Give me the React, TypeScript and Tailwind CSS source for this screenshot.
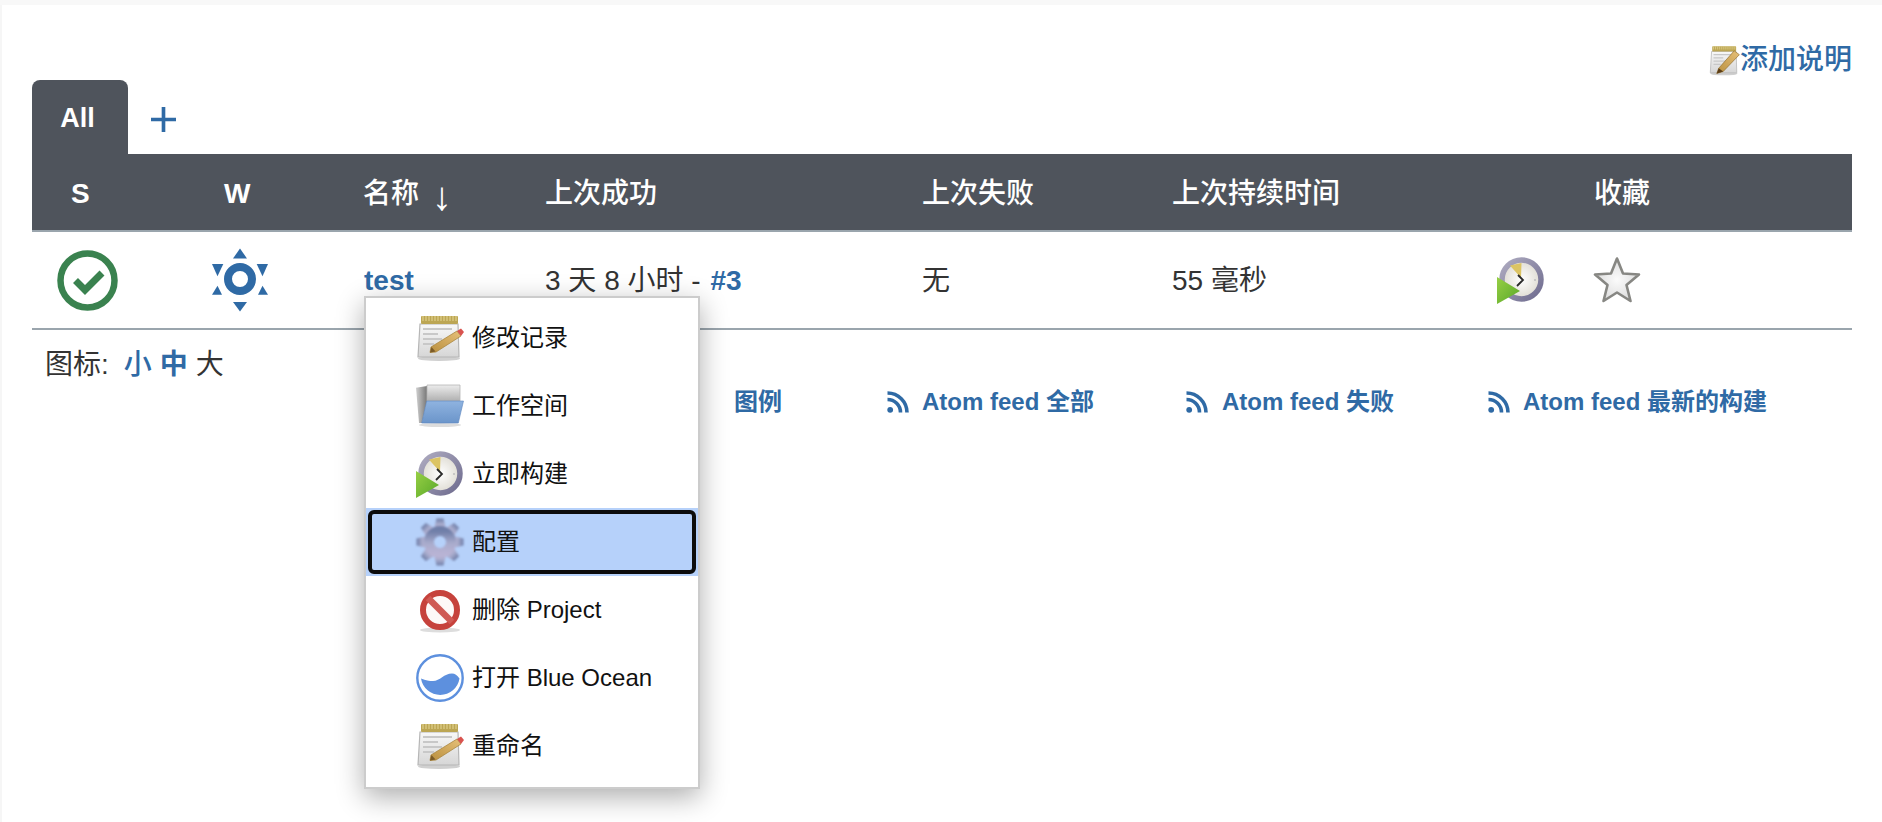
import React from "react";

const FONT = "[font-family:'Liberation_Sans','Noto_Sans_CJK_SC',sans-serif]";

function Notepad({ id, big = false }: { id: string; big?: boolean }) {
  return (
    <svg viewBox="0 0 48 48" className={big ? "w-[31px] h-[31px] blur-[0.5px]" : "w-12 h-12 blur-[0.7px]"}>
      <defs>
        <linearGradient id={id} x1="0" y1="0" x2="0" y2="1">
          <stop offset="0" stopColor="#f8f8f8" />
          <stop offset="1" stopColor="#d6d6d6" />
        </linearGradient>
        <linearGradient id={id + "p"} x1="0" y1="1" x2="1" y2="0">
          <stop offset="0" stopColor="#b98f3e" />
          <stop offset="1" stopColor="#e6c079" />
        </linearGradient>
      </defs>
      <ellipse cx="23" cy="44.5" rx="21" ry="2.5" fill="#d0d0d0" />
      <path d="M4 10 L42 10 L43 43 L2 43 Z" fill={`url(#${id})`} stroke="#b6b6b6" strokeWidth="1.2" />
      <rect x="5" y="2" width="37" height="8" rx="1" fill="#bca654" />
      <path d="M7 2v5M10 2v5M13 2v5M16 2v5M19 2v5M22 2v5M25 2v5M28 2v5M31 2v5M34 2v5M37 2v5M40 2v5" stroke="#e0cf8a" strokeWidth="1.2" />
      <path d="M7 15H36M7 20H22M7 25H26M7 30H18" stroke="#c8c8c8" strokeWidth="1.8" />
      {big ? (
        <>
          <path d="M15 36 L39 9 L47 15 L22 41 L12 44 Z" fill={`url(#${id}p)`} stroke="#8d6b2c" strokeWidth="1" />
          <path d="M12 44 L15 36 L22 41 Z" fill="#5b3d17" />
        </>
      ) : (
        <>
          <path d="M15 33 L41 17 L45 22 L20 38 L14 38.5 Z" fill={`url(#${id}p)`} stroke="#a98640" strokeWidth="0.8" />
          <path d="M14 38.5 L15.5 33 L19.5 37.5 Z" fill="#7a5a28" />
          <path d="M41 17 L45 14.5 L48 18 L45 22 Z" fill="#d9534f" />
        </>
      )}
    </svg>
  );
}

function Folder() {
  return (
    <svg viewBox="0 0 48 48" className="w-12 h-12 blur-[0.7px]">
      <defs>
        <linearGradient id="fb" x1="0" y1="0" x2="0" y2="1">
          <stop offset="0" stopColor="#8fb3e0" />
          <stop offset="1" stopColor="#6b95ca" />
        </linearGradient>
        <linearGradient id="fg" x1="0" y1="0" x2="1" y2="0">
          <stop offset="0" stopColor="#d0d0d0" />
          <stop offset="1" stopColor="#777777" />
        </linearGradient>
        <linearGradient id="fp" x1="0" y1="0" x2="0" y2="1">
          <stop offset="0" stopColor="#ececec" />
          <stop offset="1" stopColor="#b0b0b0" />
        </linearGradient>
      </defs>
      <ellipse cx="24" cy="43" rx="21" ry="2" fill="#dcdcdc" />
      <path d="M0 5.7 L11 4 L11 20 L6 41 L3 41 Z" fill="url(#fg)" />
      <path d="M11 3 L44 3 L44 19 L11 19 Z" fill="url(#fp)" stroke="#b5b5b5" strokeWidth="0.8" />
      <path d="M10.7 19 L47.5 19 L42.3 41 L5.7 41 Z" fill="url(#fb)" stroke="#5f88bf" strokeWidth="0.6" />
    </svg>
  );
}

function Clock({ id }: { id: string }) {
  return (
    <svg viewBox="0 0 48 48" className="w-12 h-12 shrink-0 blur-[0.7px]">
      <defs>
        <radialGradient id={id}>
          <stop offset="0" stopColor="#ffffff" />
          <stop offset="1" stopColor="#dedbd2" />
        </radialGradient>
        <linearGradient id={id + "g"} x1="0" y1="0" x2="1" y2="1">
          <stop offset="0" stopColor="#97cf45" />
          <stop offset="1" stopColor="#58a828" />
        </linearGradient>
        <linearGradient id={id + "r"} x1="0" y1="0" x2="1" y2="1">
          <stop offset="0" stopColor="#aeabc0" />
          <stop offset="1" stopColor="#6f6c8f" />
        </linearGradient>
      </defs>
      <circle cx="24.5" cy="23.5" r="19.5" fill={`url(#${id})`} stroke={`url(#${id}r)`} strokeWidth="5.5" />
      <path d="M24 22 L13 9.5 L24.5 7 Z" fill="#dcc463" />
      <path d="M21 19 L26 24 L20 30" stroke="#2a2a2a" strokeWidth="1.8" fill="none" />
      <circle cx="38" cy="24" r="1" fill="#bdbdbd" />
      <path d="M0 21 L23 35 L0 48 Z" fill={`url(#${id}g)`} />
    </svg>
  );
}

function Gear() {
  return (
    <svg viewBox="-24 -24 48 48" className="w-12 h-12 blur-[0.8px]">
      <defs>
        <linearGradient id="gr" x1="0" y1="0" x2="0" y2="1">
          <stop offset="0" stopColor="#6f7ea8" />
          <stop offset="0.55" stopColor="#a8abcc" />
          <stop offset="1" stopColor="#b8b3d4" />
        </linearGradient>
      </defs>
      <g fill="url(#gr)">
        {[0, 45, 90, 135, 180, 225, 270, 315].map((a) => (
          <path key={a} d="M-6 -13 L-3.5 -23.5 L3.5 -23.5 L6 -13 Z" transform={`rotate(${a})`} />
        ))}
      </g>
      <circle r="11" fill="none" stroke="url(#gr)" strokeWidth="10" />
      <circle r="5.5" fill="#b6d1fa" />
    </svg>
  );
}

function NoSign() {
  return (
    <svg viewBox="-24 -24 48 48" className="w-12 h-12 blur-[0.7px]">
      <ellipse cx="0" cy="20" rx="20" ry="2.5" fill="#dddddd" />
      <circle r="17" fill="#fdf8f7" stroke="#c6423c" strokeWidth="6" />
      <path d="M-12 -12 L12 12" stroke="#cf5a54" strokeWidth="6.5" />
    </svg>
  );
}

function Ocean() {
  return (
    <svg viewBox="0 0 48 48" className="w-12 h-12">
      <circle cx="24" cy="24" r="22.7" fill="#fff" stroke="#5d90de" strokeWidth="2.4" />
      <path d="M5 24.5 C10 26.5 13 27 17 27 C24 27 28 19.5 36 19.5 C39 19.5 41 21 43.5 24.5 A19.5 19.5 0 0 1 5 24.5 Z" fill="#5d90de" />
    </svg>
  );
}

function Star() {
  return (
    <svg viewBox="0 0 48 48" className="w-12 h-12 shrink-0 blur-[0.4px]">
      <defs>
        <radialGradient id="st">
          <stop offset="0" stopColor="#fbfbfb" />
          <stop offset="1" stopColor="#dedede" />
        </radialGradient>
      </defs>
      <path d="M24 2.5 L30 17.5 L46 18.5 L33.5 29 L37.5 45 L24 36.5 L10.5 45 L14.5 29 L2 18.5 L18 17.5 Z" fill="url(#st)" stroke="#878783" strokeWidth="2.6" strokeLinejoin="round" />
    </svg>
  );
}

function Rss() {
  return (
    <svg viewBox="0 0 22 22" className="w-[22px] h-[22px] shrink-0">
      <circle cx="3.2" cy="18.8" r="2.9" fill="#2f6aa5" />
      <path d="M0.5 8.5 A13 13 0 0 1 13.5 21.5 M0.5 2 A19.5 19.5 0 0 1 20 21.5" fill="none" stroke="#2f6aa5" strokeWidth="3.6" />
    </svg>
  );
}

function Check() {
  return (
    <svg viewBox="0 0 61 61" className="w-[61px] h-[61px]">
      <circle cx="30.5" cy="30.5" r="27" fill="none" stroke="#3a824f" strokeWidth="6.5" />
      <path d="M18.5 30.5 L28 40 L45 23" fill="none" stroke="#3a824f" strokeWidth="7" />
    </svg>
  );
}

function Weather() {
  return (
    <svg viewBox="-32 -32 64 66" className="h-[66px] w-16">
      <g fill="#2f6aa5">
        <path d="M0 -30.5 L-7 -20.5 L7 -20.5 Z" />
        <path d="M0 32.5 L-7 23 L7 23 Z" />
        <path d="M16.7 -15 L28 -15 L22.5 -2.7 Z" />
        <path d="M-16.7 -15 L-28 -15 L-22.5 -2.7 Z" />
        <path d="M18 15.7 L28 15.7 L22.5 6.7 Z" />
        <path d="M-18 15.7 L-28 15.7 L-22.5 6.7 Z" />
      </g>
      <circle r="12" fill="none" stroke="#2f6aa5" strokeWidth="8" />
    </svg>
  );
}

function MenuItem({ icon, label, active = false }: { icon: React.ReactNode; label: string; active?: boolean }) {
  return (
    <div className={active ? "relative flex h-[68px] items-center gap-[8px] pl-[50px] bg-[#b6d1fa]" : "relative flex h-[68px] items-center gap-[8px] pl-[50px]"}>
      {active && <div className="absolute inset-x-[2px] inset-y-[2px] rounded-[6px] border-4 border-[#0c0c0c]" />}
      <span className="relative flex w-12 h-12 shrink-0">{icon}</span>
      <span className="relative text-[24px] leading-none text-[#111]">{label}</span>
    </div>
  );
}

const cols = "grid grid-cols-[96px_218px_182px_376px_250px_326px_1fr]";

export default function App() {
  return (
    <div className={`${FONT} relative h-[822px] w-full overflow-hidden bg-white text-[#333]`}>
      <div className="h-[5px] bg-[#f8f8f8]" />
      <div className="h-[817px] border-l-2 border-[#f6f6f6] pr-[30px] pl-[30px]">
        <div className="flex h-[75px] items-start justify-end pt-[38px]">
          <a className="flex items-center text-[28px] leading-[32px] font-medium text-[#2f6aa5]">
            <span className="mt-[2px] flex"><Notepad id="nd" big /></span>
            添加说明
          </a>
        </div>

        <div className="flex h-[74px] items-stretch">
          <div className="flex w-[96px] items-center justify-center rounded-t-[8px] bg-[#4f545c] pt-[2px] pr-[5px] text-[27px] font-bold text-white">All</div>
          <div className="flex items-center pl-[23px] pt-[5px]">
            <svg viewBox="0 0 24 24" className="h-[25px] w-[25px]" fill="none" stroke="#2f6aa5" strokeWidth="3.5">
              <path d="M12 0V24M0 12H24" />
            </svg>
          </div>
        </div>

        <div className={`${cols} h-[78px] items-center border-b-2 border-[#9aa5ad] bg-[#4f545c] pt-[3px] text-[28px] font-medium text-white`}>
          <div className="pl-[39px] text-[28px] font-bold">S</div>
          <div className="pl-[96px] text-[28px] font-bold">W</div>
          <div className="flex h-[32px] items-center pl-[17px]">名称<span className="ml-[13px] mt-[4px] text-[40px] leading-none font-normal">↓</span></div>
          <div className="pl-[17px]">上次成功</div>
          <div className="pl-[18px]">上次失败</div>
          <div className="pl-[18px]">上次持续时间</div>
          <div className="pl-[114px]">收藏</div>
        </div>

        <div className={`${cols} h-[98px] items-center border-b-2 border-[#9aa5ad] text-[28px]`}>
          <div className="pl-[25px]"><Check /></div>
          <div className="pl-[80px]"><Weather /></div>
          <div className="relative flex h-full items-center pl-[18px]">
            <a className="pt-[2px] text-[28px] font-bold text-[#2f6aa5]">test</a>
            <div className="absolute left-[18px] top-[64px] z-10 w-[336px] border-2 border-[#cccccc] bg-white pt-[6px] pb-[7px] shadow-[0_8px_26px_rgba(0,0,0,0.32)]">
              <MenuItem icon={<Notepad id="n1" />} label="修改记录" />
              <MenuItem icon={<Folder />} label="工作空间" />
              <MenuItem icon={<Clock id="c1" />} label="立即构建" />
              <MenuItem icon={<Gear />} label="配置" active />
              <MenuItem icon={<NoSign />} label="删除 Project" />
              <MenuItem icon={<Ocean />} label="打开 Blue Ocean" />
              <MenuItem icon={<Notepad id="n2" />} label="重命名" />
            </div>
          </div>
          <div className="pl-[17px] pt-[2px]">3 天 8 小时 - <a className="ml-[2px] font-bold text-[#2f6aa5]">#3</a></div>
          <div className="pl-[18px] pt-[2px]">无</div>
          <div className="pl-[18px] pt-[2px]">55 毫秒</div>
          <div className="flex items-center pl-[17px] gap-[48px]">
            <Clock id="c2" />
            <Star />
          </div>
        </div>

        <div className="flex h-[68px] items-center pl-[13px] pt-[2px] text-[28px]">
          图标:
          <a className="ml-[15px] font-medium text-[#2f6aa5]">小</a>
          <a className="ml-[8px] font-bold text-[#2f6aa5]">中</a>
          <span className="ml-[8px]">大</span>
        </div>

        <div className="-mt-[14px] grid grid-cols-[153px_299px_302px_auto] pl-[702px] text-[24px] font-bold text-[#2f6aa5]">
          <a>图例</a>
          <a className="flex items-center gap-[13px]"><Rss />Atom feed 全部</a>
          <a className="flex items-center gap-[14px]"><Rss />Atom feed 失败</a>
          <a className="flex items-center gap-[13px]"><Rss />Atom feed 最新的构建</a>
        </div>
      </div>
    </div>
  );
}
